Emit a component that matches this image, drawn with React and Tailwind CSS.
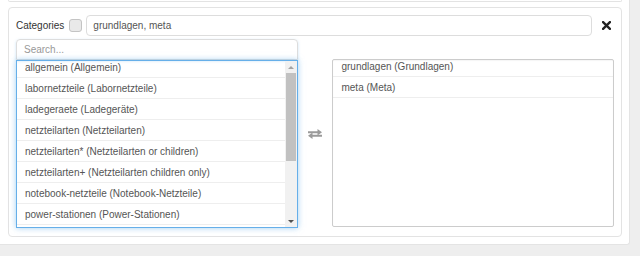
import React from 'react'

const available = [
  'allgemein (Allgemein)',
  'labornetzteile (Labornetzteile)',
  'ladegeraete (Ladegeräte)',
  'netzteilarten (Netzteilarten)',
  'netzteilarten* (Netzteilarten or children)',
  'netzteilarten+ (Netzteilarten children only)',
  'notebook-netzteile (Notebook-Netzteile)',
  'power-stationen (Power-Stationen)',
]

const selected = ['grundlagen (Grundlagen)', 'meta (Meta)']

function Row({ label }) {
  return (
    <div className="h-[21px] shrink-0 border-b border-[#eeeeee] pl-[8px] pt-[1px] flex items-center text-[#555555] whitespace-nowrap">
      {label}
    </div>
  )
}

export default function App() {
  return (
    <div className="w-[640px] h-[256px] overflow-hidden bg-[#eeeeee] font-['Liberation_Sans',Arial,sans-serif] text-[10px]">
      <div className="w-[630px] bg-white border-r border-b border-[#e4e4e4] rounded-br-[3px] pl-[8px] pr-[7px] pb-[7px]">
        <div className="h-[2px] border-x border-b border-[#e3e3e3] rounded-b-[4px]" />

        <div className="mt-[5px] border border-[#e3e3e3] rounded-[4px] px-[7px] pt-[7px] pb-[8px]">
          <div className="flex items-center h-[21px]">
            <span className="text-[#333333]">Categories</span>
            <span className="ml-[5px] w-[13px] h-[13px] rounded-[3px] border border-[#c4c4c4] bg-[#e9e9e9]" />
            <div className="ml-[4px] flex-1 h-[21px] border border-[#dddddd] rounded-[4px] pl-[6px] flex items-center text-[#555555]">
              grundlagen, meta
            </div>
            <div className="w-[22px] flex justify-end pr-[3px]">
              <svg viewBox="0 0 10 10" className="w-[9px] h-[9px]" aria-hidden="true">
                <path d="M1.2 1.2L8.8 8.8M8.8 1.2L1.2 8.8" stroke="#222222" strokeWidth="2.6" strokeLinecap="square" />
              </svg>
            </div>
          </div>

          <div className="flex mt-[3px]">
            <div className="w-[282px] flex flex-col">
              <div className="h-[21px] border border-[#dddddd] rounded-t-[4px] pl-[7px] flex items-center text-[#999999] shadow-[0_1px_3px_rgba(102,175,233,0.35)]">
                Search...
              </div>
              <div className="h-[168px] border border-[#66afe9] shadow-[0_0_6px_rgba(102,175,233,0.6)] flex overflow-hidden">
                <div className="flex-1 overflow-hidden">
                  <div className="-mt-[4px] flex flex-col">
                    {available.map((a) => (
                      <Row key={a} label={a} />
                    ))}
                  </div>
                </div>
                <div className="w-[12px] bg-[#f1f1f1] flex flex-col items-center">
                  <div className="h-[12px] flex items-center justify-center">
                    <div className="w-0 h-0 border-x-[3px] border-x-transparent border-b-[3px] border-b-[#a3a3a3]" />
                  </div>
                  <div className="w-[10px] h-[88px] bg-[#c1c1c1]" />
                  <div className="flex-1" />
                  <div className="h-[12px] flex items-center justify-center">
                    <div className="w-0 h-0 border-x-[3px] border-x-transparent border-t-[3px] border-t-[#505050]" />
                  </div>
                </div>
              </div>
            </div>

            <div className="w-[35px] flex justify-center pt-[90px]">
              <svg viewBox="0 0 16 10" className="w-[16px] h-[10px]" aria-hidden="true">
                <path d="M1 2.2H10.5V0L15 3.2L10.5 6.4V4.2H1Z" fill="#9a9a9a" />
                <path d="M15 5.8H5.5V3.6L1 6.8L5.5 10V7.8H15Z" fill="#9a9a9a" />
              </svg>
            </div>

            <div className="w-[282px] mt-[20px] h-[168px] border border-[#cccccc] rounded-[2px] overflow-hidden shadow-[inset_0_1px_1px_rgba(0,0,0,0.04)]">
              <div className="-mt-[4px] flex flex-col">
                {selected.map((s) => (
                  <Row key={s} label={s} />
                ))}
              </div>
            </div>
          </div>
        </div>
      </div>
    </div>
  )
}
